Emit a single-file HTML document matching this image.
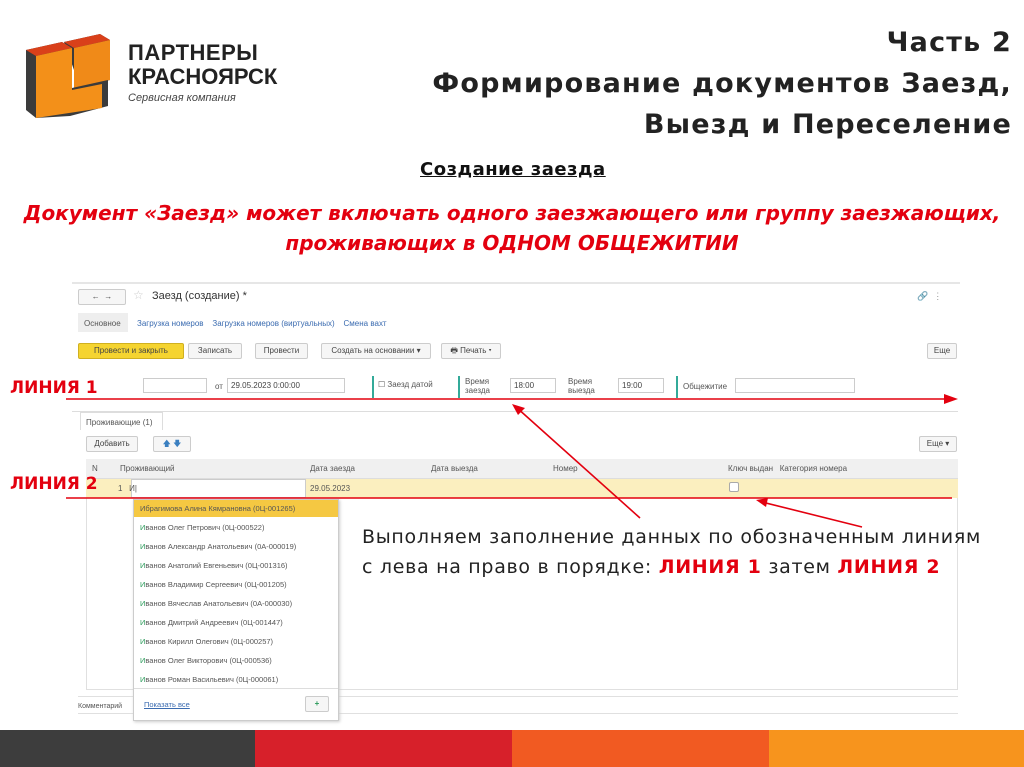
<!DOCTYPE html>
<html><head><meta charset="utf-8"><style>
*{margin:0;padding:0;box-sizing:border-box}
body{width:1024px;height:767px;position:relative;background:#fff;font-family:"Liberation Sans",sans-serif;overflow:hidden}
.a{position:absolute;white-space:nowrap}
.s{font-size:8px;color:#555}
.btn{position:absolute;border:1px solid #ccc;border-radius:2px;background:#f6f6f6;font-size:8px;color:#444;text-align:center;line-height:14px;height:16px}
.in{position:absolute;border:1px solid #ccc;background:#fff;height:15px;font-size:8px;color:#444;line-height:13px;padding-left:3px}
.li{position:absolute;left:140px;font-size:7.5px;color:#555}
.li b{color:#2a9a5a;font-weight:normal}
.dj{font-family:"DejaVu Sans",sans-serif}
</style></head><body>
<!-- logo -->
<svg class="a" style="left:24px;top:30px" width="90" height="90" viewBox="0 0 90 90">
<polygon points="40,12 76,4 86,10 86,50 50,58 50,40" fill="#3b3b3b"/>
<polygon points="40,12 76,4 86,10 50,18" fill="#d9401a"/>
<polygon points="50,18 86,10 86,50 50,58" fill="#f08a18"/>
<polygon points="2,20 38,12 48,18 48,58 84,50 84,76 46,86 12,88 2,80" fill="#3b3b3b"/>
<polygon points="2,20 38,12 48,18 12,26" fill="#d9401a"/>
<polygon points="12,26 48,18 48,60 78,54 78,78 12,88" fill="#f39019"/>
</svg>
<div class="a" style="left:128px;top:42px;font-size:22px;line-height:22px;color:#222;letter-spacing:0.5px;font-weight:bold">ПАРТНЕРЫ</div>
<div class="a" style="left:128px;top:66px;font-size:22px;line-height:22px;color:#222;letter-spacing:0px;font-weight:bold">КРАСНОЯРСК</div>
<div class="a" style="left:128px;top:92px;font-size:11px;font-style:italic;color:#444">Сервисная компания</div>
<div class="a dj" style="right:12px;top:22px;text-align:right;font-size:27px;font-weight:bold;line-height:41px;color:#222;letter-spacing:1.2px">Часть 2<br>Формирование документов Заезд,<br>Выезд и Переселение</div>
<div class="a dj" style="left:420px;top:159px;font-size:18px;font-weight:bold;text-decoration:underline;color:#111;letter-spacing:0.5px">Создание заезда</div>
<div class="a dj" style="left:0;width:1024px;text-align:center;top:198px;font-size:20px;font-weight:bold;font-style:oblique;color:#e3000f;line-height:30px">Документ «Заезд» может включать одного заезжающего или группу заезжающих,<br>проживающих в ОДНОМ ОБЩЕЖИТИИ</div>

<!-- screenshot -->
<div class="a" style="left:72px;top:282px;width:888px;height:440px;background:#fff;border-top:2px solid #e6e6e6"></div>
<div class="btn" style="left:78px;top:289px;width:48px"> ← &nbsp;→</div>
<div class="a" style="left:133px;top:288px;font-size:12px;color:#ccc">☆</div>
<div class="a" style="left:152px;top:290px;font-size:11px;color:#333">Заезд (создание) *</div>
<div class="a" style="left:917px;top:291px;font-size:9px;color:#999">🔗 &nbsp;⋮</div>
<div class="a" style="left:78px;top:313px;width:50px;height:19px;background:#eee"></div>
<div class="a s" style="left:84px;top:319px">Основное</div>
<div class="a s" style="left:137px;top:319px;color:#3a6bb0">Загрузка номеров &nbsp;&nbsp;&nbsp;Загрузка номеров (виртуальных) &nbsp;&nbsp;&nbsp;Смена вахт</div>
<div class="btn" style="left:78px;top:343px;width:106px;background:#f5d430;border-color:#d0b020">Провести и закрыть</div>
<div class="btn" style="left:188px;top:343px;width:54px">Записать</div>
<div class="btn" style="left:255px;top:343px;width:53px">Провести</div>
<div class="btn" style="left:321px;top:343px;width:110px">Создать на основании ▾</div>
<div class="btn" style="left:441px;top:343px;width:60px">🖶 Печать ▾</div>
<div class="btn" style="left:927px;top:343px;width:30px">Еще</div>
<div class="in" style="left:143px;top:378px;width:64px"></div>
<div class="a s" style="left:215px;top:382px">от</div>
<div class="in" style="left:227px;top:378px;width:118px">29.05.2023 0:00:00</div>
<div class="a" style="left:372px;top:376px;width:2px;height:22px;background:#3a9"></div>
<div class="a s" style="left:378px;top:380px">☐ Заезд датой</div>
<div class="a" style="left:458px;top:376px;width:2px;height:22px;background:#3a9"></div>
<div class="a s" style="left:465px;top:377px;line-height:9px">Время<br>заезда</div>
<div class="in" style="left:510px;top:378px;width:46px">18:00</div>
<div class="a s" style="left:568px;top:377px;line-height:9px">Время<br>выезда</div>
<div class="in" style="left:618px;top:378px;width:46px">19:00</div>
<div class="a" style="left:676px;top:376px;width:2px;height:22px;background:#3a9"></div>
<div class="a s" style="left:683px;top:382px">Общежитие</div>
<div class="in" style="left:735px;top:378px;width:120px"></div>
<div class="a" style="left:72px;top:411px;width:886px;height:1px;background:#ddd"></div>
<div class="a" style="left:80px;top:412px;width:83px;height:18px;border:1px solid #ddd;border-bottom:none;background:#fff"></div>
<div class="a s" style="left:86px;top:418px">Проживающие (1)</div>
<div class="btn" style="left:86px;top:436px;width:52px">Добавить</div>
<div class="btn" style="left:153px;top:436px;width:38px;color:#3a7fc0">🡅 🡇</div>
<div class="btn" style="left:919px;top:436px;width:38px">Еще ▾</div>
<div class="a" style="left:86px;top:459px;width:872px;height:20px;background:#f0f0f0;border-bottom:1px solid #ddd"></div>
<div class="a s" style="left:92px;top:464px">N &nbsp;&nbsp;&nbsp;&nbsp;&nbsp;&nbsp;&nbsp;&nbsp;&nbsp;Проживающий</div>
<div class="a s" style="left:310px;top:464px">Дата заезда</div>
<div class="a s" style="left:431px;top:464px">Дата выезда</div>
<div class="a s" style="left:553px;top:464px">Номер</div>
<div class="a s" style="left:728px;top:464px">Ключ выдан &nbsp;&nbsp;Категория номера</div>
<div class="a" style="left:86px;top:479px;width:872px;height:19px;background:#fbefbf"></div>
<div class="a" style="left:131px;top:479px;width:175px;height:19px;background:#fff;border:1px solid #ccc"></div>
<div class="a s" style="left:118px;top:484px">1 &nbsp;&nbsp;И|</div>
<div class="a s" style="left:310px;top:484px">29.05.2023</div>
<div class="a" style="left:729px;top:482px;width:10px;height:10px;border:1px solid #aaa;background:#fff;border-radius:2px"></div>
<div class="a" style="left:86px;top:498px;width:872px;height:192px;border:1px solid #e0e0e0;border-top:none"></div>
<div class="a s" style="left:78px;top:703px;font-size:7px">Комментарий</div>
<div class="a" style="left:78px;top:696px;width:880px;height:1px;background:#e0e0e0"></div>
<div class="a" style="left:78px;top:713px;width:880px;height:1px;background:#e0e0e0"></div>
<!-- dropdown -->
<div class="a" style="left:133px;top:499px;width:206px;height:222px;background:#fff;border:1px solid #ccc;box-shadow:1px 1px 3px #ccc"></div>
<div class="a" style="left:134px;top:500px;width:204px;height:17px;background:#f5c842"></div>
<div class="li" style="top:504px">Ибрагимова Алина Кямрановна (0Ц-001265)</div>
<div class="li" style="top:523px"><b>И</b>ванов Олег Петрович (0Ц-000522)</div>
<div class="li" style="top:542px"><b>И</b>ванов Александр Анатольевич (0А-000019)</div>
<div class="li" style="top:561px"><b>И</b>ванов Анатолий Евгеньевич (0Ц-001316)</div>
<div class="li" style="top:580px"><b>И</b>ванов Владимир Сергеевич (0Ц-001205)</div>
<div class="li" style="top:599px"><b>И</b>ванов Вячеслав Анатольевич (0А-000030)</div>
<div class="li" style="top:618px"><b>И</b>ванов Дмитрий Андреевич (0Ц-001447)</div>
<div class="li" style="top:637px"><b>И</b>ванов Кирилл Олегович (0Ц-000257)</div>
<div class="li" style="top:656px"><b>И</b>ванов Олег Викторович (0Ц-000536)</div>
<div class="li" style="top:675px"><b>И</b>ванов Роман Васильевич (0Ц-000061)</div>
<div class="a" style="left:134px;top:688px;width:204px;height:1px;background:#ddd"></div>
<div class="li" style="top:700px;left:144px;color:#3a6bb0;text-decoration:underline">Показать все</div>
<div class="btn" style="left:305px;top:696px;width:24px;color:#2a9a5a;font-weight:bold">+</div>

<!-- annotations -->
<div class="a dj" style="left:10px;top:378px;font-size:17px;font-weight:bold;color:#e3000f">ЛИНИЯ 1</div>
<div class="a dj" style="left:10px;top:474px;font-size:17px;font-weight:bold;color:#e3000f">ЛИНИЯ 2</div>
<svg class="a" style="left:0;top:0" width="1024" height="767">
<g stroke="#e3000f" stroke-width="1.6" fill="#e3000f">
<line x1="66" y1="399" x2="952" y2="399"/><polygon points="958,399 944,394 944,404" stroke="none"/>
<line x1="66" y1="498" x2="952" y2="498"/>
<line x1="640" y1="518" x2="516" y2="407"/><polygon points="512,404 525,408 518,415" stroke="none"/>
<line x1="862" y1="527" x2="762" y2="502"/><polygon points="756,500 768,498 766,507" stroke="none"/>
</g></svg>
<div class="a dj" style="left:362px;top:522px;font-size:19px;line-height:30px;color:#222;letter-spacing:0.7px">Выполняем заполнение данных по обозначенным линиям<br>с лева на право в порядке: <b style="color:#e3000f">ЛИНИЯ 1</b> затем <b style="color:#e3000f">ЛИНИЯ 2</b></div>

<!-- footer -->
<div class="a" style="left:0;top:730px;width:255px;height:37px;background:#3d3d3d"></div>
<div class="a" style="left:255px;top:730px;width:257px;height:37px;background:#d7202a"></div>
<div class="a" style="left:512px;top:730px;width:257px;height:37px;background:#f15a22"></div>
<div class="a" style="left:769px;top:730px;width:255px;height:37px;background:#f7941d"></div>
</body></html>
